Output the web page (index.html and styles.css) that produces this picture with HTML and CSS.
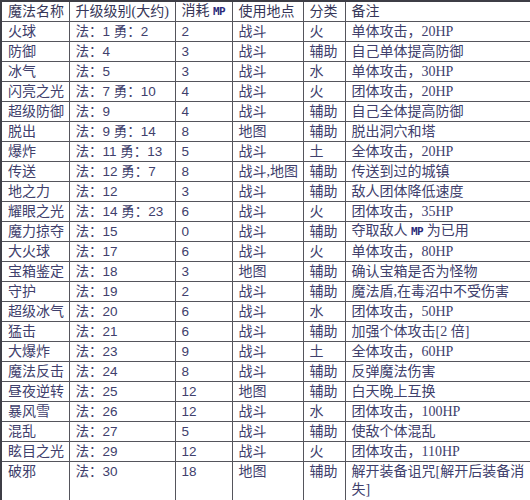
FILE: index.html
```html
<!DOCTYPE html>
<html lang="zh">
<head>
<meta charset="utf-8">
<link rel="stylesheet" href="styles.css">
</head>
<body>
<table class="magic">
<colgroup>
<col class="c1"><col class="c2"><col class="c3"><col class="c4"><col class="c5"><col class="c6">
</colgroup>
<thead>
<tr><th>魔法名称</th><th>升级级别(大约)</th><th>消耗 <b class="mp">MP</b></th><th>使用地点</th><th>分类</th><th>备注</th></tr>
</thead>
<tbody>
<tr><td>火球</td><td class="num">法：1 勇：2</td><td class="num">2</td><td>战斗</td><td>火</td><td>单体攻击，20HP</td></tr>
<tr><td>防御</td><td class="num">法：4</td><td class="num">3</td><td>战斗</td><td>辅助</td><td>自己单体提高防御</td></tr>
<tr><td>冰气</td><td class="num">法：5</td><td class="num">3</td><td>战斗</td><td>水</td><td>单体攻击，30HP</td></tr>
<tr><td>闪亮之光</td><td class="num">法：7 勇：10</td><td class="num">4</td><td>战斗</td><td>火</td><td>团体攻击，20HP</td></tr>
<tr><td>超级防御</td><td class="num">法：9</td><td class="num">4</td><td>战斗</td><td>辅助</td><td>自己全体提高防御</td></tr>
<tr><td>脱出</td><td class="num">法：9 勇：14</td><td class="num">8</td><td>地图</td><td>辅助</td><td>脱出洞穴和塔</td></tr>
<tr><td>爆炸</td><td class="num">法：11 勇：13</td><td class="num">5</td><td>战斗</td><td>土</td><td>全体攻击，20HP</td></tr>
<tr><td>传送</td><td class="num">法：12 勇：7</td><td class="num">8</td><td>战斗,地图</td><td>辅助</td><td>传送到过的城镇</td></tr>
<tr><td>地之力</td><td class="num">法：12</td><td class="num">3</td><td>战斗</td><td>辅助</td><td>敌人团体降低速度</td></tr>
<tr><td>耀眼之光</td><td class="num">法：14 勇：23</td><td class="num">6</td><td>战斗</td><td>火</td><td>团体攻击，35HP</td></tr>
<tr><td>魔力掠夺</td><td class="num">法：15</td><td class="num">0</td><td>战斗</td><td>辅助</td><td>夺取敌人 <b class="mp">MP</b> 为已用</td></tr>
<tr><td>大火球</td><td class="num">法：17</td><td class="num">6</td><td>战斗</td><td>火</td><td>单体攻击，80HP</td></tr>
<tr><td>宝箱鉴定</td><td class="num">法：18</td><td class="num">3</td><td>地图</td><td>辅助</td><td>确认宝箱是否为怪物</td></tr>
<tr><td>守护</td><td class="num">法：19</td><td class="num">2</td><td>战斗</td><td>辅助</td><td>魔法盾,在毒沼中不受伤害</td></tr>
<tr><td>超级冰气</td><td class="num">法：20</td><td class="num">6</td><td>战斗</td><td>水</td><td>团体攻击，50HP</td></tr>
<tr><td>猛击</td><td class="num">法：21</td><td class="num">6</td><td>战斗</td><td>辅助</td><td>加强个体攻击[2 倍]</td></tr>
<tr><td>大爆炸</td><td class="num">法：23</td><td class="num">9</td><td>战斗</td><td>土</td><td>全体攻击，60HP</td></tr>
<tr><td>魔法反击</td><td class="num">法：24</td><td class="num">8</td><td>战斗</td><td>辅助</td><td>反弹魔法伤害</td></tr>
<tr><td>昼夜逆转</td><td class="num">法：25</td><td class="num">12</td><td>地图</td><td>辅助</td><td>白天晚上互换</td></tr>
<tr><td>暴风雪</td><td class="num">法：26</td><td class="num">12</td><td>战斗</td><td>水</td><td>团体攻击，100HP</td></tr>
<tr><td>混乱</td><td class="num">法：27</td><td class="num">5</td><td>战斗</td><td>辅助</td><td>使敌个体混乱</td></tr>
<tr><td>眩目之光</td><td class="num">法：29</td><td class="num">12</td><td>战斗</td><td>火</td><td>团体攻击，110HP</td></tr>
<tr class="tall"><td>破邪</td><td class="num">法：30</td><td class="num">18</td><td>地图</td><td>辅助</td><td>解开装备诅咒[解开后装备消失]</td></tr>
</tbody>
</table>
</body>
</html>
```

FILE: styles.css
```css
html, body {
  margin: 0;
  padding: 0;
  background: #ffffff;
}

.magic {
  width: 530px;
  table-layout: fixed;
  border-collapse: collapse;
  border: 2px solid #3e3e46;
  font-family: "Liberation Serif", "Noto Sans CJK SC", serif;
  font-size: 14px;
  color: #40406c;
}

.c1 { width: 68px; }
.c2 { width: 106px; }
.c3 { width: 57px; }
.c4 { width: 71px; }
.c5 { width: 42px; }
.c6 { width: 186px; }

.magic th,
.magic td {
  border: 1px solid #55555c;
  padding: 0 0 0 6px;
  height: 19px;
  line-height: 18px;
  text-align: left;
  vertical-align: middle;
  font-weight: normal;
  white-space: nowrap;
  overflow: hidden;
}

.magic th {
  color: #363658;
}

.magic .num {
  font-family: "Liberation Sans", "Noto Sans CJK SC", sans-serif;
  font-size: 13.5px;
}

.mp {
  font-family: "DejaVu Sans Mono", monospace;
  font-weight: bold;
  font-size: 11px;
  color: #2a2a7a;
  letter-spacing: -0.5px;
}

.magic .tall td {
  height: 38px;
  vertical-align: top;
  white-space: normal;
  padding-top: 1px;
}
```
